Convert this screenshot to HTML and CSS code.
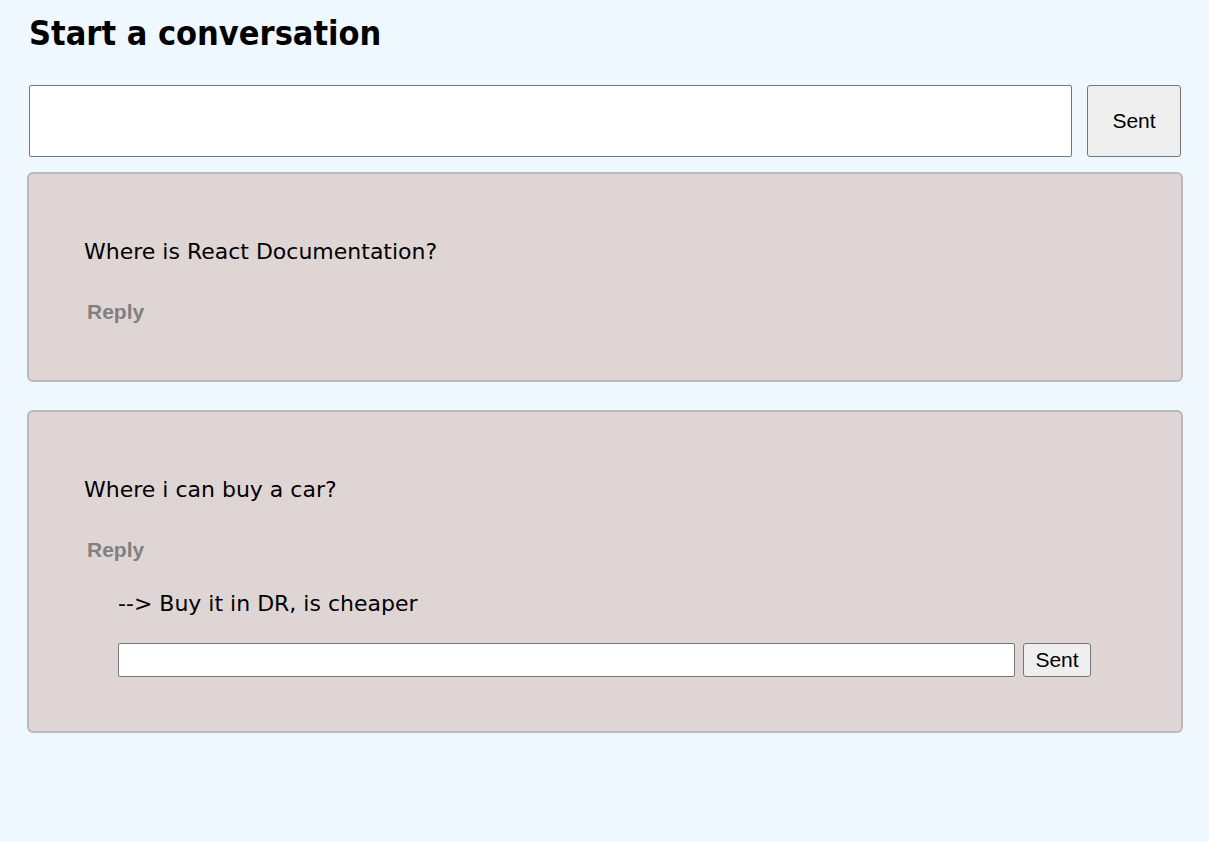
FILE: index.html
```html
<!DOCTYPE html>
<html>
<head>
<meta charset="utf-8">
<link rel="stylesheet" href="styles.css">
</head>
<body>
<div class="page">
  <h1 class="title">Start a conversation</h1>
  <div class="composer">
    <input class="composer-input" type="text">
    <button class="composer-btn">Sent</button>
  </div>
  <div class="thread">
    <div class="card">
      <p class="message">Where is React Documentation?</p>
      <button class="reply-btn">Reply</button>
    </div>
    <div class="card card-open">
      <p class="message">Where i can buy a car?</p>
      <button class="reply-btn">Reply</button>
      <div class="replies">
        <p class="reply-text">--&gt; Buy it in DR, is cheaper</p>
        <div class="reply-form">
          <input class="reply-input" type="text">
          <button class="reply-send">Sent</button>
        </div>
      </div>
    </div>
  </div>
</div>
</body>
</html>
```
FILE: styles.css
```css
html, body {
  margin: 0;
  padding: 0;
  background: #f0f8ff;
}
body {
  font-family: "DejaVu Sans", sans-serif;
  color: #000;
}
.page {
  padding: 12px 26px 0 27px;
}
.title {
  margin: 0 0 0 2px;
  font-family: "DejaVu Sans Condensed", "DejaVu Sans", sans-serif;
  font-size: 34px;
  font-weight: bold;
  line-height: 42px;
}
.composer {
  display: flex;
  gap: 15px;
  margin: 31px 2px 15px 2px;
}
.composer-input {
  flex: 1;
  height: 72px;
  box-sizing: border-box;
  border: 1px solid #767676;
  border-radius: 2px;
  background: #fff;
  margin: 0;
}
.composer-btn {
  width: 94px;
  height: 72px;
  box-sizing: border-box;
  border: 1px solid #767676;
  border-radius: 3px;
  background: #efefef;
  font-family: "Liberation Sans", Arial, sans-serif;
  font-size: 21px;
  color: #000;
  margin: 0;
  padding: 0;
}
.thread {
  display: flex;
  flex-direction: column;
  gap: 28px;
}
.card {
  background: #e0d5d5;
  border: 2px solid #b9b9b9;
  border-radius: 6px;
  padding: 63px 55px 56px 55px;
}
.card-open {
  padding-bottom: 54px;
}
.message {
  margin: 0;
  font-size: 22px;
  line-height: 30px;
}
.reply-btn {
  display: block;
  margin: 33px 0 0 0;
  padding: 0 3px;
  border: none;
  background: none;
  font-family: "Liberation Sans", Arial, sans-serif;
  font-weight: bold;
  font-size: 21px;
  line-height: 24px;
  color: #808080;
}
.replies {
  padding: 0 35px 0 34px;
  margin-top: 27px;
}
.reply-text {
  margin: 0;
  font-size: 22px;
  line-height: 30px;
}
.reply-form {
  display: flex;
  gap: 8px;
  margin-top: 24px;
}
.reply-input {
  flex: 1;
  height: 34px;
  box-sizing: border-box;
  border: 1px solid #767676;
  border-radius: 2px;
  background: #fff;
  margin: 0;
}
.reply-send {
  width: 68px;
  height: 34px;
  box-sizing: border-box;
  border: 1px solid #767676;
  border-radius: 3px;
  background: #efefef;
  font-family: "Liberation Sans", Arial, sans-serif;
  font-size: 21px;
  color: #000;
  margin: 0;
  padding: 0;
}
```
